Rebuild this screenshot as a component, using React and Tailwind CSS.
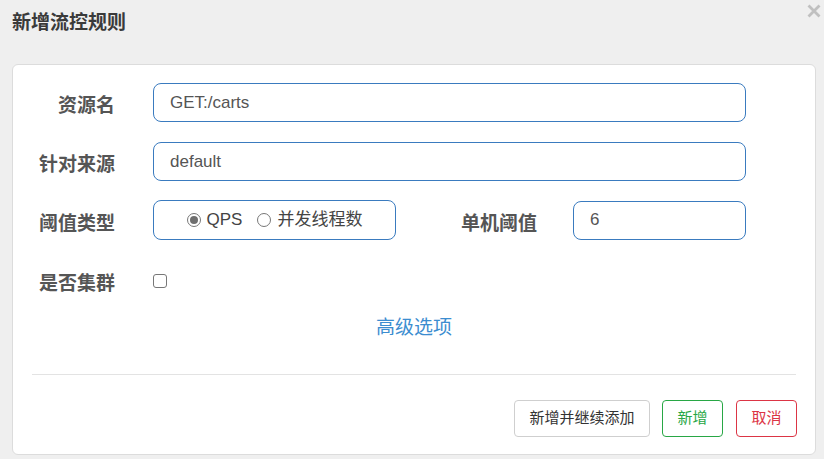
import React from "react";

const FONT = { fontFamily: '"Liberation Sans", "Noto Sans CJK SC", sans-serif' };

function Label({ children, className = "" }) {
  return (
    <div className={"w-[102px] shrink-0 text-right text-[19px] leading-[26px] font-bold text-[#555] mt-[7px] " + className}>
      {children}
    </div>
  );
}

function TextInput({ value, className = "" }) {
  return (
    <div className={"h-[39px] border border-[#3a7bbf] rounded-[8px] pl-4 flex items-center text-[17px] text-[#555] bg-white " + className}>
      {value}
    </div>
  );
}

function Radio({ checked, label }) {
  return (
    <div className="flex items-center">
      <span className="w-[14px] h-[14px] rounded-full border border-[#777] flex items-center justify-center bg-white">
        {checked && <span className="w-[8px] h-[8px] rounded-full bg-[#6e6e6e]" />}
      </span>
      <span className="ml-[6px] text-[17px] leading-[22px] text-[#444]">{label}</span>
    </div>
  );
}

export default function App() {
  return (
    <div className="w-[824px] h-[459px] bg-[#efefef] relative overflow-hidden" style={FONT}>
      <div className="h-[64px] pt-[12px] pl-[12px]">
        <div className="text-[19px] leading-[22px] font-bold text-[#3a3a3a]">新增流控规则</div>
      </div>
      <svg className="absolute right-[3px] top-[4px]" width="14" height="14" viewBox="0 0 14 14" aria-label="close">
        <path d="M1.5 1.5 L12.5 12.5 M12.5 1.5 L1.5 12.5" stroke="#c0c0c0" strokeWidth="2.8" strokeLinecap="butt" />
      </svg>

      <div className="ml-[12px] w-[804px] h-[391px] bg-white border border-[#dcdcdc] rounded-[6px] pt-[18px] pb-[17px] flex flex-col">
        <div className="flex items-center">
          <Label>资源名</Label>
          <TextInput value="GET:/carts" className="ml-[38px] w-[593px]" />
        </div>
        <div className="flex items-center mt-[20px]">
          <Label>针对来源</Label>
          <TextInput value="default" className="ml-[38px] w-[593px]" />
        </div>
        <div className="flex items-center mt-[19px]">
          <Label>阈值类型</Label>
          <div className="ml-[38px] w-[243px] h-[40px] border border-[#3a7bbf] rounded-[8px] flex items-center justify-center gap-[15px]">
            <Radio checked label="QPS" />
            <Radio label="并发线程数" />
          </div>
          <Label className="ml-[39px]">单机阈值</Label>
          <TextInput value="6" className="ml-[36px] w-[173px]" />
        </div>
        <div className="flex items-center mt-[21px] h-[39px]">
          <Label>是否集群</Label>
          <div className="ml-[38px] w-[14px] h-[14px] rounded-[3px] border border-[#777] bg-white" />
        </div>
        <div className="mt-[15px] h-[26px] text-center text-[19px] leading-[26px] text-[#3c8dd0]">高级选项</div>
        <div className="mt-[33px] mx-[19px] h-px bg-[#e3e3e3]" />
        <div className="mt-[25px] mr-[18px] flex justify-end gap-[12px]">
          <div className="w-[136px] h-[37px] border border-[#cfcfcf] rounded-[4px] flex items-center justify-center text-[15px] text-[#333]">新增并继续添加</div>
          <div className="w-[61px] h-[37px] border border-[#28a745] rounded-[4px] flex items-center justify-center text-[15px] text-[#28a745]">新增</div>
          <div className="ml-[1px] w-[61px] h-[37px] border border-[#dc3545] rounded-[4px] flex items-center justify-center text-[15px] text-[#dc3545]">取消</div>
        </div>
      </div>
    </div>
  );
}
